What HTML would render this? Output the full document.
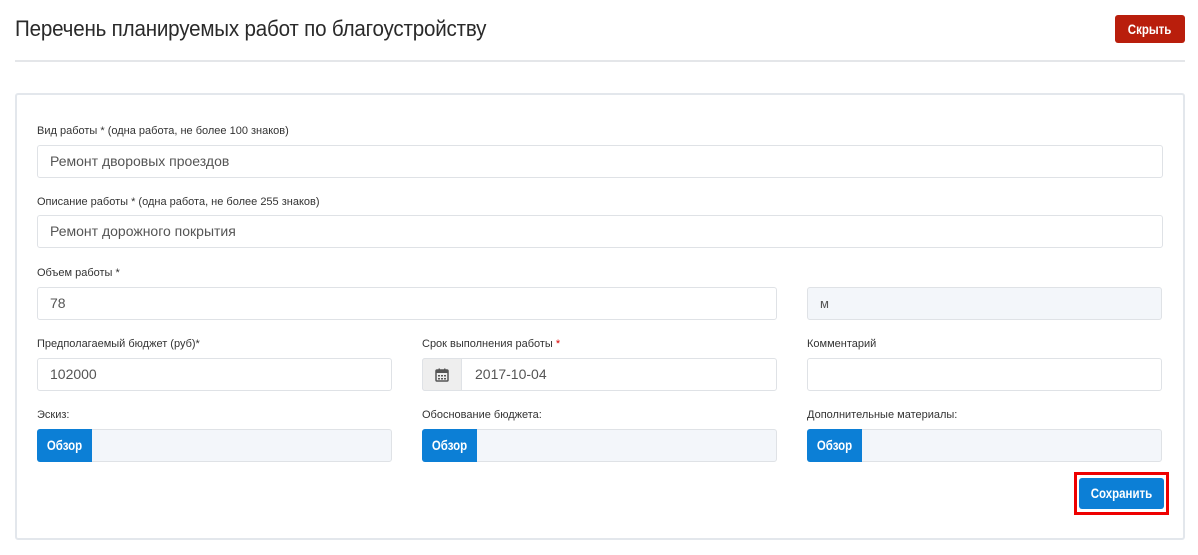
<!DOCTYPE html>
<html><head><meta charset="utf-8"><style>
*{box-sizing:border-box;margin:0;padding:0}
body{width:1198px;height:555px;background:#fff;font-family:"Liberation Sans",sans-serif;position:relative;overflow:hidden;color:#333}
.a{position:absolute}
h1{position:absolute;left:15px;top:16px;font-size:22px;font-weight:normal;color:#2a2a2a;letter-spacing:-0.2px;transform:scaleX(0.935);transform-origin:left;white-space:nowrap}
.hr{left:15px;top:60px;width:1170px;height:2px;background:#e4e6e9}
.btnr{left:1115px;top:15px;width:70px;height:28px;background:#b91e0c;border-radius:3px;color:#fff;font-size:14px;font-weight:bold;text-align:center;line-height:28px}
.panel{left:15px;top:93px;width:1170px;height:447px;border:2px solid #e3e7ec;border-radius:3px}
.lab{font-size:11px;color:#333}
.in{border:1px solid #dfe2e6;border-radius:3px;height:33px;font-size:14px;color:#555;padding-left:12px;line-height:31px;background:#fff}
.g{background:#f3f6fa}
.ob{position:absolute;left:-1px;top:-1px;width:55px;height:33px;background:#0c7fd6;color:#fff;font-weight:bold;font-size:14px;line-height:33px;text-align:center;border-radius:3px 0 0 3px}
.n{display:inline-block;transform:scaleX(0.82)}
.red{color:#d00}
</style></head><body>
<h1>Перечень планируемых работ по благоустройству</h1>
<div class="a btnr"><span class="n">Скрыть</span></div>
<div class="a hr"></div>
<div class="a panel"></div>

<div class="a lab" style="left:37px;top:125px">Вид работы * (одна работа, не более 100 знаков)</div>
<div class="a in" style="left:37px;top:145px;width:1126px">Ремонт дворовых проездов</div>

<div class="a lab" style="left:37px;top:196px">Описание работы * (одна работа, не более 255 знаков)</div>
<div class="a in" style="left:37px;top:215px;width:1126px">Ремонт дорожного покрытия</div>

<div class="a lab" style="left:37px;top:267px">Объем работы *</div>
<div class="a in" style="left:37px;top:287px;width:740px">78</div>
<div class="a in g" style="left:807px;top:287px;width:355px;font-size:13px">м</div>

<div class="a lab" style="left:37px;top:338px">Предполагаемый бюджет (руб)*</div>
<div class="a in" style="left:37px;top:358px;width:355px">102000</div>
<div class="a lab" style="left:422px;top:338px">Срок выполнения работы <span class="red">*</span></div>
<div class="a in" style="left:422px;top:358px;width:355px;padding-left:52px">2017-10-04
<div style="position:absolute;left:-1px;top:-1px;width:40px;height:33px;background:#eeeeee;border:1px solid #dfe2e6;border-radius:3px 0 0 3px">
<svg width="14" height="14" viewBox="0 0 14 14" style="position:absolute;left:12px;top:9px"><rect x="1" y="2" width="12" height="11" rx="1" fill="none" stroke="#555" stroke-width="1.5"/><rect x="1" y="2" width="12" height="3" fill="#555"/><rect x="3.5" y="0.5" width="1.5" height="3" fill="#555"/><rect x="9" y="0.5" width="1.5" height="3" fill="#555"/><g fill="#555"><rect x="3" y="7" width="2" height="1.5"/><rect x="6" y="7" width="2" height="1.5"/><rect x="9" y="7" width="2" height="1.5"/><rect x="3" y="10" width="2" height="1.5"/><rect x="6" y="10" width="2" height="1.5"/><rect x="9" y="10" width="2" height="1.5"/></g></svg></div></div>
<div class="a lab" style="left:807px;top:338px">Комментарий</div>
<div class="a in" style="left:807px;top:358px;width:355px"></div>

<div class="a lab" style="left:37px;top:409px">Эскиз:</div>
<div class="a in g" style="left:37px;top:429px;width:355px"><div class="ob"><span class="n">Обзор</span></div></div>
<div class="a lab" style="left:422px;top:409px">Обоснование бюджета:</div>
<div class="a in g" style="left:422px;top:429px;width:355px"><div class="ob"><span class="n">Обзор</span></div></div>
<div class="a lab" style="left:807px;top:409px">Дополнительные материалы:</div>
<div class="a in g" style="left:807px;top:429px;width:355px"><div class="ob"><span class="n">Обзор</span></div></div>

<div class="a" style="left:1074px;top:472px;width:95px;height:43px;border:3px solid #e00"></div>
<div class="a" style="left:1079px;top:478px;width:85px;height:31px;background:#0c7fd6;border-radius:3px;color:#fff;font-weight:bold;font-size:14px;line-height:31px;text-align:center"><span class="n">Сохранить</span></div>
</body></html>
